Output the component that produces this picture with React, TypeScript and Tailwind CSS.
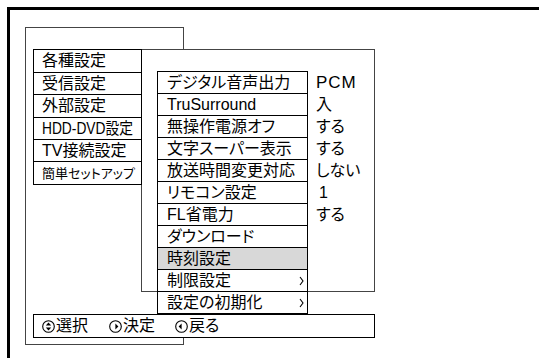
import React from 'react';

const mainItems: { label: string; h: string; cls?: string }[] = [
    { label: '各種設定', h: 'h-[24px]' },
    { label: '受信設定', h: 'h-[23px]' },
    { label: '外部設定', h: 'h-[24px]' },
    { label: 'HDD-DVD設定', h: 'h-[23px]', cls: 'inline-block scale-x-[0.86] origin-left whitespace-nowrap' },
    { label: 'TV接続設定', h: 'h-[23px]' },
    { label: '簡単セットアップ', h: 'h-[24px]', cls: 'text-[13px]' },
];

const subItems: { label: string; value?: string; arrow?: boolean; active?: boolean }[] = [
    { label: 'デジタル音声出力', value: 'PCM' },
    { label: 'TruSurround', value: '入' },
    { label: '無操作電源オフ', value: 'する' },
    { label: '文字スーパー表示', value: 'する' },
    { label: '放送時間変更対応', value: 'しない' },
    { label: 'リモコン設定', value: '1' },
    { label: 'FL省電力', value: 'する' },
    { label: 'ダウンロード' },
    { label: '時刻設定', active: true },
    { label: '制限設定', arrow: true },
    { label: '設定の初期化', arrow: true },
];

const CircleIcon: React.FC<{ kind: 'updown' | 'right' | 'left' }> = ({ kind }) => (
    <svg width="13" height="13" viewBox="0 0 13 13" className="shrink-0">
        <circle cx="6.5" cy="6.5" r="5.8" fill="none" stroke="black" strokeWidth="1.1" />
        {kind === 'updown' && (
            <>
                <path d="M6.5 2.6 L9.2 5.6 L3.8 5.6 Z" fill="black" />
                <path d="M6.5 10.4 L9.2 7.4 L3.8 7.4 Z" fill="black" />
            </>
        )}
        {kind === 'right' && <path d="M6.4 3.6 L9.4 6.5 L6.4 9.4 Z" fill="black" />}
        {kind === 'left' && <path d="M6.6 3.6 L3.6 6.5 L6.6 9.4 Z" fill="black" />}
    </svg>
);

const Chevron = () => (
    <svg width="5" height="10" viewBox="0 0 5 10" className="shrink-0">
        <path d="M1 1 L4 5 L1 9" fill="none" stroke="black" strokeWidth="1.1" />
    </svg>
);

export default function App() {
    return (
        <div
            className="w-[539px] h-[358px] overflow-hidden bg-white pl-[7px] pt-[7px] text-black text-[16px] leading-none [font-feature-settings:'palt']"
            style={{ fontFamily: '"Liberation Sans", "Noto Sans CJK JP", sans-serif' }}
        >
            <div className="relative w-[540px] h-[360px] border-t-[3px] border-l-[3px] border-black">
                {/* back window */}
                <div className="absolute left-[15px] top-[17px] w-[159px] h-[318px] border border-[#444] bg-white" />
                {/* sub window */}
                <div className="absolute left-[131px] top-[39px] w-[234px] h-[243px] border border-[#444] bg-white" />

                <div className="relative pl-[23px] pt-[39px]">
                    <div className="flex items-start">
                        <ul className="w-[109px]">
                            {mainItems.map((item, i) => (
                                <li
                                    key={item.label}
                                    className={`${item.h} ${i > 0 ? '-mt-px' : ''} flex items-center border border-black bg-white pl-2`}
                                >
                                    <span className={item.cls}>{item.label}</span>
                                </li>
                            ))}
                        </ul>

                        <ul className="ml-[15px] mt-[22px]">
                            {subItems.map((item, i) => (
                                <li key={item.label} className={`flex h-[23px] ${i > 0 ? '-mt-px' : ''}`}>
                                    <div
                                        className={`w-[151px] flex items-center justify-between border border-black pl-[9px] pr-[3px] ${item.active ? 'bg-[#d8d8d8]' : 'bg-white'}`}
                                    >
                                        <span className="whitespace-nowrap">{item.label}</span>
                                        {item.arrow && <Chevron />}
                                    </div>
                                    {item.value && (
                                        <div className={`flex items-center ml-[8px] ${item.value === 'PCM' ? 'text-[17px] tracking-[1px]' : ''} ${item.value === '1' ? 'pl-[3px]' : ''}`}>
                                            {item.value}
                                        </div>
                                    )}
                                </li>
                            ))}
                        </ul>
                    </div>

                    <div className="w-[342px] h-[24px] flex items-center border border-black bg-white pl-[8px]">
                        <CircleIcon kind="updown" />
                        <span className="ml-[1px]">選択</span>
                        <span className="ml-[21px]"><CircleIcon kind="right" /></span>
                        <span className="ml-[1px]">決定</span>
                        <span className="ml-[20px]"><CircleIcon kind="left" /></span>
                        <span className="ml-[1px]">戻る</span>
                    </div>
                </div>
            </div>
        </div>
    );
}
